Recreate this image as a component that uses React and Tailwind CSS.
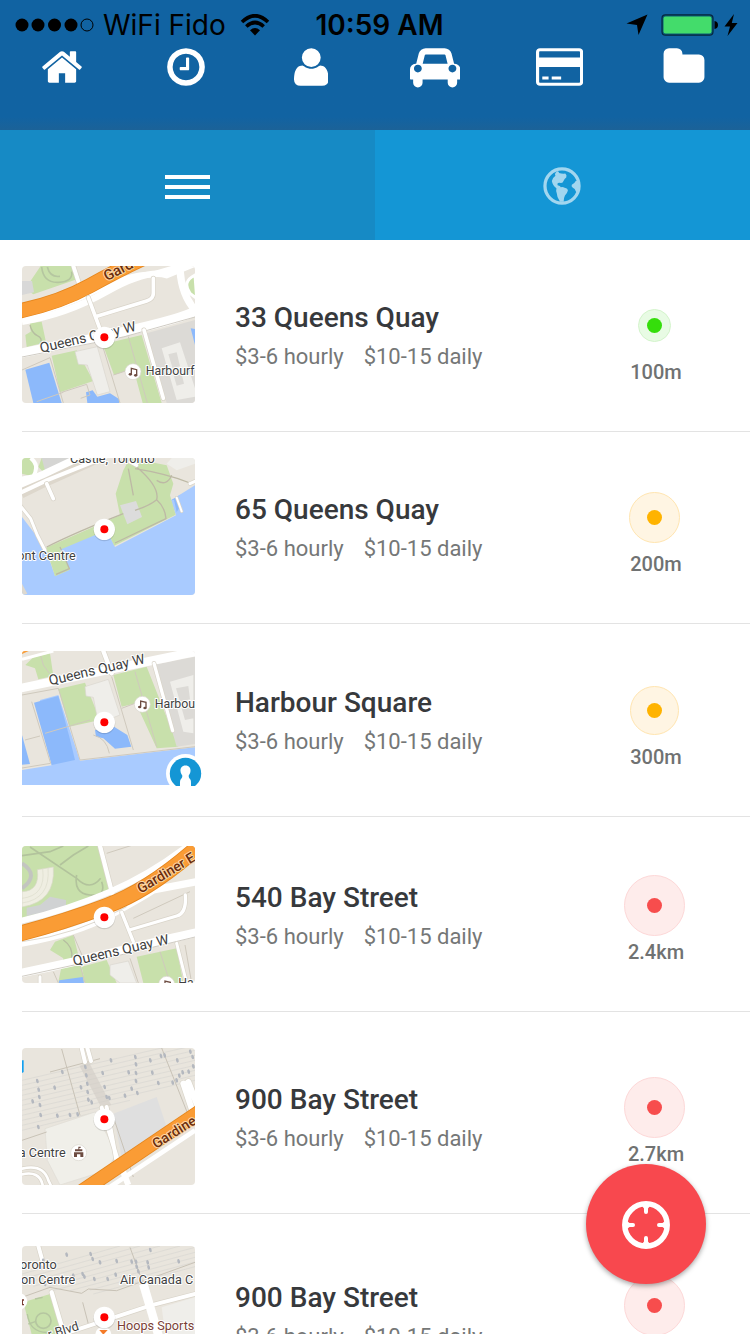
import React from "react";

const BLOCK = "#e9e5dd";
const PARK = "#c8e0ab";
const WATER = "#a9cbff";
const BASIN = "#8cb9fb";
const LINE = "#cfc9bd";

function NavIcon({ children, width = 1792 }) {
  return (
    <svg
      viewBox={`0 0 ${width} 1792`}
      className="h-11 w-auto"
      fill="currentColor"
      fillRule="evenodd"
      aria-hidden="true"
    >
      {children}
    </svg>
  );
}

const NAV = [
  {
    label: "Home",
    icon: (
      <NavIcon>
        <path d="M1472 992v480q0 26-19 45t-45 19h-384v-384h-256v384h-384q-26 0-45-19t-19-45v-480q0-1 .5-3t.5-3l575-474 575 474q1 2 1 6zm223-69l-62 74q-8 9-21 11h-3q-13 0-21-7l-692-577-692 577q-12 8-24 7-13-2-21-11l-62-74q-8-10-7-23.5t11-21.5l719-599q32-26 76-26t76 26l244 204v-195q0-14 9-23t23-9h192q14 0 23 9t9 23v408l219 182q10 8 11 21.5t-7 23.5z" />
      </NavIcon>
    ),
  },
  {
    label: "History",
    icon: (
      <NavIcon>
        <path d="M1024 544v448q0 14-9 23t-23 9h-320q-14 0-23-9t-9-23v-64q0-14 9-23t23-9h224v-352q0-14 9-23t23-9h64q14 0 23 9t9 23zm416 352q0-148-73-273t-198-198-273-73-273 73-198 198-73 273 73 273 198 198 273 73 273-73 198-198 73-273zm224 0q0 209-103 385.5t-279.5 279.5-385.5 103-385.5-103-279.5-279.5-103-385.5 103-385.5 279.5-279.5 385.5-103 385.5 103 279.5 279.5 103 385.5z" />
      </NavIcon>
    ),
  },
  {
    label: "Profile",
    icon: (
      <NavIcon width={1408}>
        <g transform="translate(0 1536) scale(1 -1)">
          <path d="M1408 131q0 -120 -73 -189.5t-194 -69.5h-874q-121 0 -194 69.5t-73 189.5q0 53 3.5 103.5t14 109t26.5 108.5t43 97.5t62 81t85.5 53.5t111.5 20q9 0 42 -21.5t74.5 -48t108 -48t133.5 -21.5t133.5 21.5t108 48t74.5 48t42 21.5q61 0 111.5 -20t85.5 -53.5t62 -81t43 -97.5t26.5 -108.5t14 -109t3.5 -103.5z" />
          <path d="M1088 1024q0 -159 -112.5 -271.5t-271.5 -112.5t-271.5 112.5t-112.5 271.5t112.5 271.5t271.5 112.5t271.5 -112.5t112.5 -271.5z" />
        </g>
      </NavIcon>
    ),
  },
  {
    label: "Vehicles",
    icon: (
      <NavIcon width={2048}>
        <path
          transform="translate(0 1536) scale(1 -1)"
          d="M480 576q0 66 -47 113t-113 47t-113 -47t-47 -113t47 -113t113 -47t113 47t47 113zM516 768h1016l-89 357q-2 8 -14 17.5t-21 9.5h-768q-9 0 -21 -9.5t-14 -17.5zM1888 576q0 66 -47 113t-113 47t-113 -47t-47 -113t47 -113t113 -47t113 47t47 113zM2048 544v-384q0 -14 -9 -23t-23 -9h-96v-128q0 -80 -56 -136t-136 -56t-136 56t-56 136v128h-1024v-128q0 -80 -56 -136t-136 -56t-136 56t-56 136v128h-96q-14 0 -23 9t-9 23v384q0 93 65.5 158.5t158.5 65.5h28l105 419q23 94 104 157.5t179 63.5h768q98 0 179 -63.5t104 -157.5l105 -419h28q93 0 158.5 -65.5t65.5 -158.5z"
        />
      </NavIcon>
    ),
  },
  {
    label: "Payment",
    icon: (
      <NavIcon width={1920}>
        <path d="M160 128h1600q66 0 113 47t47 113v1216q0 66-47 113t-113 47H160q-66 0-113-47t-47-113V288q0-66 47-113t113-47zM160 256q-32 0-32 32v224h1664V288q0-32-32-32zM128 896v608q0 32 32 32h1600q32 0 32-32V896zM256 1280h256v128H256zM640 1280h384v128H640z" />
      </NavIcon>
    ),
  },
  {
    label: "Documents",
    icon: (
      <NavIcon>
        <path d="M1728 608v704q0 92-66 158t-158 66h-1216q-92 0-158-66t-66-158v-960q0-92 66-158t158-66h320q92 0 158 66t66 158v32h672q92 0 158 66t66 158z" />
      </NavIcon>
    ),
  },
];

function Label({ x, y, size = 37, weight = 400, rotate = 0, fill = "#3f3f3f", halo = "#fff", children }) {
  return (
    <text
      x={x}
      y={y}
      fontSize={size}
      fill={fill}
      stroke={halo}
      strokeWidth="6"
      strokeLinejoin="round"
      paintOrder="stroke"
      fontFamily="Roboto, sans-serif"
      fontWeight={weight}
      transform={`rotate(${rotate} ${x} ${y})`}
    >
      {children}
    </text>
  );
}

function Note({ x, y }) {
  return (
    <g transform={`translate(${x} ${y})`}>
      <circle r="24" fill="#fff" stroke="#d8d4cc" strokeWidth="2" />
      <path
        d="M-5 7V-10L11 -6V10"
        fill="none"
        stroke="#6d4c41"
        strokeWidth="4"
      />
      <ellipse cx="-8" cy="8" rx="5" ry="4" fill="#6d4c41" />
      <ellipse cx="8" cy="11" rx="5" ry="4" fill="#6d4c41" />
    </g>
  );
}

function Road({ d, w = 12, edge = true, color = "#fff" }) {
  return (
    <g fill="none" strokeLinecap="round" strokeLinejoin="round">
      {edge && <path d={d} stroke="#d9d4c9" strokeWidth={w + 4} />}
      <path d={d} stroke={color} strokeWidth={w} />
    </g>
  );
}

function Thin({ d, color = LINE, w = 3 }) {
  return <path d={d} fill="none" stroke={color} strokeWidth={w} />;
}

function Hatch({ lines }) {
  return <path d={lines} stroke="#d8d6d2" strokeWidth="2" fill="none" />;
}

function Switches({ points }) {
  return (
    <g fill="#b4b8bf">
      {points.map(([x, y]) => (
        <ellipse key={`${x}-${y}`} cx={x} cy={y} rx="4" ry="7" transform={`rotate(-15 ${x} ${y})`} />
      ))}
    </g>
  );
}

function QueensMap() {
  return (
    <>
      <path d="M92 33H190L203 72 70 118 36 95 60 80Z" fill={PARK} />
      <path d="M36 78H66L72 112 36 120Z" fill="#d8d8d8" />
      <Thin d="M95 36Q100 84 145 82T185 50M112 36Q120 68 150 64" color="#b5c6a0" w={5} />
      <path d="M60 205L95 200 108 262 50 276 46 240 62 230Z" fill={PARK} />
      <Thin d="M60 210Q66 235 82 242T92 266" color="#b5bda0" w={4} />
      <path d="M125 302L200 286 250 378 150 412Z" fill={PARK} />
      <path d="M278 268L395 240 455 444H398L370 340 312 360Z" fill={PARK} />
      <path d="M410 235L555 195V444H470Z" fill="#dcdad6" />
      <path d="M455 280L510 262 555 400V425L500 435ZM475 298L488 340 510 334 500 292ZM490 358L500 392 522 386 514 352Z" fill="#efeeea" fillRule="evenodd" />
      <path d="M195 290L262 275 300 410 262 420 232 330 205 328Z" fill="#efeeea" stroke="#d9d6cf" strokeWidth="2" />
      <path d="M46 344L118 323 155 444H70Z" fill={BASIN} />
      <path d="M228 412L248 406 262 425 300 415 327 432V444H232Z" fill={BASIN} />
      <path d="M542 220L555 222V270Z" fill={BASIN} />
      <Thin d="M36 345L120 308 160 444M280 280L330 444M355 245L412 444M310 360L365 342M155 412L230 388 240 420 212 430M80 440L160 412" />
      <Road d="M190 33L207 85" w={12} />
      <path d="M36 200Q170 178 290 110T470 60L555 25" stroke="#fff" strokeWidth="20" fill="none" />
      <path d="M30 188Q150 160 250 110T430 58L560 20" stroke="#fff" strokeWidth="18" fill="none" />
      <path d="M28 168Q150 142 240 92T400 10" stroke="#e5861d" strokeWidth="46" fill="none" />
      <path d="M28 168Q150 142 240 92T400 10" stroke="#fa9c35" strokeWidth="41" fill="none" />
      <Road d="M235 128L270 222M256 185L410 138Q430 132 430 115V70" w={11} />
      <path d="M555 60Q515 80 540 115L560 130Z" fill={PARK} stroke="#fff" strokeWidth="9" />
      <path d="M510 45Q515 120 555 165" stroke="#fff" strokeWidth="22" fill="none" />
      <path d="M30 295Q160 270 340 230T560 166" stroke="#fff" strokeWidth="28" fill="none" />
      <Thin d="M36 306L340 246 555 186" color="#d0ccc4" />
      <Road d="M402 225L460 430" w={11} />
      <Label x={290} y={79} size={44} weight={500} rotate={-27} fill="#6b2d0c" halo="#fcd7a6">Gard</Label>
      <Label x={93} y={293} rotate={-13} size={42}>Queens Quay W</Label>
      <Note x={369} y={350} />
      <Label x={407} y={361}>Harbourf</Label>
    </>
  );
}

function HarbourMap() {
  return (
    <>
      <path d="M36 444V210L105 300 135 386 178 368 150 305 283 235 315 300 498 205 483 160 555 115V444Z" fill={WATER} />
      <path d="M340 70L360 33 470 55 490 110 480 145 497 203 313 296 290 250 150 308 180 368 135 388 108 302 330 205 317 140Z" fill={PARK} />
      <path d="M36 80V33H70Q95 60 75 90ZM95 33H190L100 75 85 60Z" fill={PARK} />
      <path d="M95 33H195L180 50 108 82Z" fill="#d5d5d3" />
      <path d="M36 410L52 440 40 444H36Z" fill="#ded9cf" />
      <path d="M330 175L378 162 396 210 352 232Z" fill="#dcdcdc" />
      <path d="M485 33H555V50L500 70 470 50Z" fill="#efeeea" />
      <path d="M483 160L492 158 500 195 510 180 498 150 515 142" fill={BASIN} />
      <Thin d="M355 65L370 145M380 60Q450 120 440 158Q420 175 375 190M375 65Q470 80 540 108M440 158Q465 180 468 215L315 288M440 100Q470 120 485 85M110 300Q200 255 340 200M150 300L178 365 138 382" color="#bdb9a5" w={4} />
      <path d="M30 132L100 98 230 40 270 20" stroke="#ddd7cc" strokeWidth="46" fill="none" />
      <path d="M30 112L100 82 210 30" stroke="#fff" strokeWidth="22" fill="none" />
      <path d="M30 138L110 100 290 28" stroke="#fff" strokeWidth="12" fill="none" />
      <path d="M62 33Q90 55 70 88L36 95" stroke="#fff" strokeWidth="12" fill="none" />
      <Road d="M110 110L130 155" w={11} />
      <Road d="M30 175L62 215Q80 265 105 310" w={9} />
      <Road d="M500 152L515 193" w={6} />
      <Road d="M555 103L540 110M360 45L380 55" w={9} />
      <Label x={180} y={47} size={38}>Castle, Toronto</Label>
      <Label x={22} y={338} size={38}>ont Centre</Label>
    </>
  );
}

function SquareMap() {
  return (
    <>
      <path d="M36 390L125 376 110 290 90 180 145 165 210 362 555 322V444H36Z" fill={WATER} />
      <path d="M72 188L145 168 178 290 195 360 125 375Z" fill={BASIN} />
      <path d="M36 285L60 372 36 374Z" fill={BASIN} />
      <path d="M70 52L120 40 130 108 85 118 75 85 46 75Z" fill={PARK} />
      <path d="M145 147L225 128 270 240 178 260Z" fill={PARK} />
      <path d="M310 105L410 80 505 320 440 325 378 190 335 200Z" fill={PARK} />
      <path d="M430 75L555 50V312L500 320Z" fill="#dcdad6" />
      <path d="M480 125L550 105V280L520 275ZM498 145L510 185 540 178 535 138ZM515 205L525 240 550 235V198Z" fill="#efeeea" fillRule="evenodd" />
      <path d="M225 140L295 118 330 225 265 250 250 172 228 168Z" fill="#efeeea" stroke="#d9d6cf" strokeWidth="2" />
      <path d="M255 270L312 260 352 285 364 320 315 326 280 295 258 290Z" fill={BASIN} />
      <Thin d="M36 165L145 145 210 360 555 320M65 185L122 370 36 384M45 300L90 288M105 280L240 240M90 40L100 75 118 100M305 110L370 330M375 95L440 320M335 205L380 188M250 285Q290 295 298 340" />
      <path d="M36 33H56L36 42Z" fill="#fa9c35" />
      <path d="M36 58L130 33" stroke="#fff" strokeWidth="9" fill="none" />
      <Road d="M280 33L305 100" w={13} />
      <path d="M30 145Q200 110 350 78T560 35" stroke="#fff" strokeWidth="26" fill="none" />
      <Road d="M432 70L488 272" w={10} />
      <Label x={120} y={136} rotate={-13} size={42}>Queens Quay W</Label>
      <Note x={397} y={193} />
      <Label x={434} y={205}>Harbou</Label>
    </>
  );
}

function GardinerMap() {
  return (
    <>
      <path d="M36 33H265L303 175 36 250Z" fill={PARK} />
      <path d="M36 85Q90 120 36 160" fill="none" stroke="#c3c5c0" strokeWidth="12" />
      <path d="M82 104L130 96Q138 200 36 216V170Q90 168 82 104Z" fill="#efeee2" stroke="#d9d9c8" strokeWidth="2" />
      <Thin d="M98 102Q108 182 36 190M114 99Q122 192 36 204" color="#dcdccb" w={2} />
      <path d="M90 210L120 185 168 195V218L50 243V218Z" fill="#d0d2d3" />
      <Thin d="M60 36L200 130Q240 170 272 130M200 120Q190 175 240 180T275 140M36 62L120 50 160 33M150 90L190 60 235 33" color="#b2c39c" w={5} />
      <path d="M135 320L190 300 225 440H145L160 370 120 345Z" fill={PARK} />
      <Thin d="M160 315Q190 335 185 370" color="#b5bda0" w={4} />
      <path d="M215 395L290 375 320 444H225ZM380 365L500 340 520 444H400Z" fill={PARK} />
      <path d="M148 436L218 426 222 444H146Z" fill={BASIN} />
      <path d="M300 390L355 378 380 444H330L300 420Z" fill="#efeeea" stroke="#d9d6cf" strokeWidth="2" />
      <Thin d="M290 55L400 20M370 250L540 170M190 300L220 370M210 390L225 444M360 370L385 444M450 350L480 444M525 330L545 444M130 410L145 444" />
      <Road d="M270 33L308 180" w={13} />
      <path d="M30 258Q170 225 300 170T555 15" stroke="#fff" strokeWidth="18" fill="none" />
      <path d="M30 325Q200 295 300 240T430 165L560 140" stroke="#fff" strokeWidth="22" fill="none" />
      <path d="M36 320Q200 300 350 215" stroke="#ded9cf" strokeWidth="3" fill="none" />
      <path d="M25 297Q160 262 290 213T565 35" stroke="#e5861d" strokeWidth="48" fill="none" />
      <path d="M25 297Q160 262 290 213T565 35" stroke="#fa9c35" strokeWidth="43" fill="none" />
      <Road d="M335 232L370 320M358 285L500 243Q530 235 526 180" w={10} />
      <path d="M30 415Q200 380 340 345T560 293" stroke="#fff" strokeWidth="26" fill="none" />
      <Thin d="M36 424L340 358 555 306" color="#d0ccc4" />
      <Road d="M500 325L530 444M90 425V444" w={9} />
      <Label x={392} y={176} size={42} weight={500} rotate={-31} fill="#6b2d0c" halo="#fcd7a6">Gardiner E</Label>
      <Label x={192} y={392} rotate={-13} size={42}>Queens Quay W</Label>
      <Note x={470} y={448} />
      <Label x={505} y={457}>Ha</Label>
    </>
  );
}

function RailMap() {
  return (
    <>
      <Hatch lines="M36 130L555 10M36 145L555 25M36 160L555 40M36 175L555 55M36 190L555 70M36 205L555 85M36 220L555 100M36 235L555 115M36 250L555 130M36 265L360 190M36 280L300 215" />
      <path d="M105 275L255 225 320 350 290 400 150 444 112 370Z" fill="#f0efe9" stroke="#dfdcd4" strokeWidth="2" />
      <path d="M310 230L440 180 470 270 335 360Z" fill="#dfdfdf" />
      <path d="M36 70H41V105L36 108Z" fill="#12a0f0" />
      <Thin d="M155 36L210 235M120 105L270 65M36 310L110 285M455 33L545 260M310 240L370 420" color="#c8c2b6" />
      <path d="M222 80L290 210" stroke="#d2cdc6" strokeWidth="30" opacity="0.6" />
      <Road d="M215 33L225 75M232 33L243 72" w={12} />
      <Road d="M275 212L325 375M290 210L320 375" w={12} />
      <Road d="M520 140L545 215M535 135L560 200" w={18} />
      <Road d="M36 395Q100 380 115 430L122 444M36 412Q88 400 98 444" w={8} />
      <Switches points={[[82,132],[86,158],[88,180],[90,204],[92,234],[85,270],[68,193],[134,152],[142,236],[157,105],[226,90],[229,115],[232,140],[233,165],[235,188],[245,196],[180,234],[203,232],[213,151],[278,108],[284,150],[290,180],[298,183],[303,70],[345,176],[356,106],[365,155],[376,60],[378,82],[378,108],[378,132],[382,168],[421,70],[427,107],[445,138],[453,57],[464,55],[502,70],[488,137],[500,130],[508,116],[518,106],[536,104],[541,44],[548,60],[550,88]]} />
      <path d="M270 470L555 280" stroke="#fff" strokeWidth="14" fill="none" />
      <path d="M330 380L355 444" stroke="#fff" strokeWidth="18" fill="none" />
      <path d="M205 470L580 217" stroke="#e5861d" strokeWidth="44" fill="none" />
      <path d="M205 470L580 217" stroke="#fa9c35" strokeWidth="39" fill="none" />
      <Label x={438} y={336} size={42} weight={500} rotate={-32} fill="#6b2d0c" halo="#fcd7a6">Gardine</Label>
      <Label x={26} y={360} size={38}>a Centre</Label>
      <circle cx="206" cy="347" r="24" fill="#fff" stroke="#d8d4cc" strokeWidth="2" />
      <path d="M192 360V346H220V360H211V352H201V360ZM195 343V337H217V343ZM205 337V329H212V333H208V337Z" fill="#6d4c41" />
    </>
  );
}

function UnionMap() {
  return (
    <>
      <Hatch lines="M36 120L330 36M36 135L390 36M36 150L450 36M70 157L510 36M110 160L555 40M120 172L555 55M180 170L555 70M240 168L555 84M250 180L555 98" />
      <path d="M40 205L120 180 155 300 145 320H70Z" fill={PARK} />
      <circle cx="100" cy="260" r="23" fill="none" stroke="#b5c6a0" strokeWidth="5" />
      <Thin d="M52 240Q60 300 120 295M55 270L78 262M75 195L98 190" color="#b5c6a0" w={4} />
      <path d="M455 220L555 190V330H470Z" fill="#efeeea" />
      <Thin d="M36 190L120 160 215 178 235 165 320 170 555 85M218 205L235 270M360 40L400 150" color="#c8c2b6" />
      <Road d="M85 36L100 90" w={12} />
      <Road d="M125 175L165 310" w={13} />
      <Road d="M100 320L420 215 555 180" w={12} />
      <path d="M400 150L450 320" stroke="#fff" strokeWidth="26" />
      <Switches points={[[170,62],[242,60],[248,75],[270,85],[320,81],[365,83],[378,83],[380,98],[385,112],[413,85],[416,100],[421,48],[506,82],[218,120],[223,128],[253,135],[293,135],[317,122],[100,80],[105,150],[93,100],[190,125],[140,135]]} />
      <Label x={30} y={104} size={38}>oronto</Label>
      <Label x={33} y={151} size={38}>on Centre</Label>
      <Label x={330} y={149} size={38}>Air Canada C</Label>
      <circle cx="28" cy="202" r="24" fill="#fff" />
      <path d="M34 196H42V200H39V210H42V214H34Z" fill="#7b3f36" />
      <Label x={118} y={315} size={38} rotate={-17}>r Blvd</Label>
      <circle cx="280" cy="302" r="24" fill="#fff" />
      <path d="M268 288H293L280 302Z" fill="#f47b29" />
      <Label x={321} y={288} size={38} fill="#7b3f36">Hoops Sports</Label>
    </>
  );
}

function Thumb({ Map, top = 33, member }) {
  return (
    <div className="relative h-[137px] w-[173px] shrink-0">
      <svg
        viewBox={member ? "36 33 519 402" : `36 ${top} 519 411`}
        className={
          member
            ? "block h-[134px] w-full rounded-t-[3px]"
            : "block h-full w-full rounded-[4px]"
        }
        role="img"
        aria-label="Map preview"
      >
        <rect x="30" y="20" width="540" height="440" fill={BLOCK} />
        <Map />
        <circle cx="283" cy={top + 217} r="33" fill="#000" opacity="0.12" />
        <circle cx="283" cy={top + 214} r="32" fill="#fff" />
        <circle cx="283" cy={top + 214} r="12" fill="#f00" />
      </svg>
      {member && (
        <svg
          viewBox="0 0 40 32"
          className="absolute -right-2.5 bottom-0.5 h-8 w-10"
          aria-hidden="true"
        >
          <circle cx="20.500" cy="19.500" r="19.500" fill="#fff" />
          <circle cx="20.500" cy="19.500" r="15.700" fill="#1496d5" />
          <path
            d="M20.500 11.500c-3.600 0-5.300 2.500-5 5.500.2 2 .9 3.400 1.800 4.400 0 1.800-.3 2.600-1.300 3.600-1.200 1-1 3.500-1 7h11c0-3.500.2-6-1-7-1-1-1.300-1.800-1.300-3.600.9-1 1.600-2.400 1.800-4.400.3-3-1.400-5.500-5-5.500z"
            fill="#fff"
          />
        </svg>
      )}
    </div>
  );
}

const SPOTS = [
  { name: "33 Queens Quay", distance: "100m", Map: QueensMap, pad: "pt-[26px]", ring: "size-[33px] border-[#d3f4cb] bg-[#e8fbe4]", dot: "bg-[#35de0b]" },
  { name: "65 Queens Quay", distance: "200m", Map: HarbourMap, pad: "pt-[26px]", ring: "size-[51px] border-[#ffe5b0] bg-[#fff5e3]", dot: "bg-[#ffb300]" },
  { name: "Harbour Square", distance: "300m", Map: SquareMap, pad: "pt-[27px]", ring: "size-[49px] border-[#ffe5b0] bg-[#fff5e3]", dot: "bg-[#ffb300]", member: true },
  { name: "540 Bay Street", distance: "2.4km", Map: GardinerMap, pad: "pt-[29px]", ring: "size-[61px] border-[#fdd8d8] bg-[#feeceb]", dot: "bg-[#f74d4d]" },
  { name: "900 Bay Street", distance: "2.7km", Map: RailMap, pad: "pt-[36px]", ring: "size-[61px] border-[#fdd8d8] bg-[#feeceb]", dot: "bg-[#f74d4d]" },
  { name: "900 Bay Street", distance: "2.7km", Map: UnionMap, pad: "pt-[32px]", ring: "size-[61px] border-[#fdd8d8] bg-[#feeceb]", dot: "bg-[#f74d4d]", top: 36 },
];

function Spot({ name, distance, Map, pad, ring, dot, member, top }) {
  return (
    <li className={`flex shrink-0 border-b border-[#e3e3e3] pb-7 ${pad}`}>
      <Thumb Map={Map} member={member} top={top} />
      <div className="min-w-0 flex-1 pl-10 pt-8">
        <h2 className="text-[28px] font-medium leading-10 text-[#37393c]">{name}</h2>
        <p className="flex gap-5 whitespace-nowrap text-[22px] leading-[38px] text-[#757777]">
          <span>$3-6 hourly</span>
          <span>$10-15 daily</span>
        </p>
      </div>
      <div className="flex w-48 shrink-0 flex-col items-center pt-7">
        <div className="flex h-[63px] items-center">
          <span className={`flex items-center justify-center rounded-full border ${ring}`}>
            <span className={`size-[15px] rounded-full ${dot}`} />
          </span>
        </div>
        <span className="pl-1 text-xl font-medium leading-[30px] text-[#707272]">{distance}</span>
      </div>
    </li>
  );
}

function StatusBar() {
  return (
    <div className="flex h-12 items-center justify-between pl-[15px] pr-3 text-black">
      <div className="flex flex-1 items-center">
        <svg viewBox="0 0 80 16" className="h-4 w-20" aria-hidden="true">
          <circle cx="7" cy="8" r="6.500" />
          <circle cx="23" cy="8" r="6.500" />
          <circle cx="39.500" cy="8" r="6.500" />
          <circle cx="56" cy="8" r="6.500" />
          <circle cx="72" cy="8" r="6" fill="none" stroke="#000" />
        </svg>
        <span className="whitespace-nowrap pl-2 text-[28px]">WiFi Fido</span>
        <svg viewBox="0 0 30 22" className="ml-3.5 h-[22px] w-[30px]" aria-hidden="true">
          <g fill="none" stroke="#000" strokeWidth="3.600">
            <path d="M2 8Q15 -4.500 28 8" />
            <path d="M6.300 12.500Q15 4.500 23.700 12.500" />
          </g>
          <path d="M10 16.200Q15 12 20 16.200L15 21.500Z" />
        </svg>
      </div>
      <span className="whitespace-nowrap pl-1.5 text-[28px] font-semibold">10:59 AM</span>
      <div className="flex flex-1 items-center justify-end">
        <svg viewBox="0 0 22 22" className="size-[22px]" aria-hidden="true">
          <path d="M21.500 0.500L12.500 21 11 11 0.500 9.500Z" />
        </svg>
        <svg viewBox="0 0 58 24" className="ml-3 h-6 w-[58px]" aria-hidden="true">
          <rect x="2" y="1.800" width="51" height="20.400" rx="3.500" fill="#0b5d78" stroke="#06263f" strokeWidth="1.200" />
          <rect x="3.500" y="3.500" width="48" height="17" rx="2" fill="#43dc6b" />
          <path d="M54.500 8Q58 8.500 58 12T54.500 16Z" />
        </svg>
        <svg viewBox="0 0 14 22" className="ml-1.5 h-[22px] w-3.5" aria-hidden="true">
          <path d="M10 0L0.500 12.500H6L3.500 22 13.500 9H7.800Z" />
        </svg>
      </div>
    </div>
  );
}

export default function App() {
  return (
    <div className="flex h-dvh flex-col overflow-hidden bg-white font-[Roboto,sans-serif]">
      <header className="h-[130px] shrink-0 bg-linear-to-b from-[#1163a2] from-90% to-[#1b6298]">
        <div className="h-[45px] pt-px font-[Inter,sans-serif]">
          <StatusBar />
        </div>
        <nav className="grid grid-cols-6 pr-1 text-white">
          {NAV.map(({ label, icon }) => (
            <a key={label} href="#" aria-label={label} className="flex justify-center">
              {icon}
            </a>
          ))}
        </nav>
      </header>

      <div className="grid h-[110px] shrink-0 grid-cols-2 bg-[#1496d5]">
        <button type="button" aria-label="List view" className="flex items-center justify-center bg-[#168ac5]">
          <span className="flex w-[45px] flex-col gap-[6px] pt-1">
            <span className="h-1 bg-white" />
            <span className="h-1 bg-white" />
            <span className="h-1 bg-white" />
          </span>
        </button>
        <button type="button" aria-label="Map view" className="flex items-center justify-center pr-0.5 pt-0.5">
          <svg viewBox="503 500 116 116" className="size-[38px] text-[#a2d6ef]" fill="currentColor" aria-hidden="true">
            <circle cx="561" cy="558" r="52" fill="none" stroke="currentColor" strokeWidth="10" />
            <path d="M545 514Q551 511 552 518Q560 521 571 520Q577 525 574 532Q568 536 566 542Q564 549 558 549Q550 546 547 551Q546 557 552 557Q556 557 557 562Q563 560 569 563Q579 565 579 572Q577 581 570 587Q567 592 566 606H555Q545 592 545 580Q542 572 544 565Q532 556 530 543Q532 533 541 527Q537 521 545 514Z" />
            <path d="M614 541L603 543Q599 551 591 554Q588 558 594 563Q601 565 603 574L609 582Z" />
          </svg>
        </button>
      </div>

      <ul className="flex min-h-0 flex-1 flex-col overflow-y-auto pl-[22px] [scrollbar-width:none]">
        {SPOTS.map((spot, index) => (
          <Spot key={index} {...spot} />
        ))}
      </ul>

      <button
        type="button"
        aria-label="Locate me"
        className="fixed bottom-[50px] right-11 flex size-[120px] items-center justify-center rounded-full bg-[#f8484e] pt-0.5 shadow-[0_2px_5px_rgba(0,0,0,0.35)]"
      >
        <svg viewBox="0 0 48 48" className="size-12" fill="none" stroke="#fff" aria-hidden="true">
          <circle cx="24" cy="24" r="21.200" strokeWidth="5.500" />
          <path d="M24 4V11M24 37V44M4 24H11M37 24H44" strokeWidth="4" strokeLinecap="round" />
          <path
            d="M20 5L24 10 28 5ZM20 43L24 38 28 43ZM5 20L10 24 5 28ZM43 20L38 24 43 28Z"
            fill="#fff"
            stroke="none"
          />
        </svg>
      </button>
    </div>
  );
}
